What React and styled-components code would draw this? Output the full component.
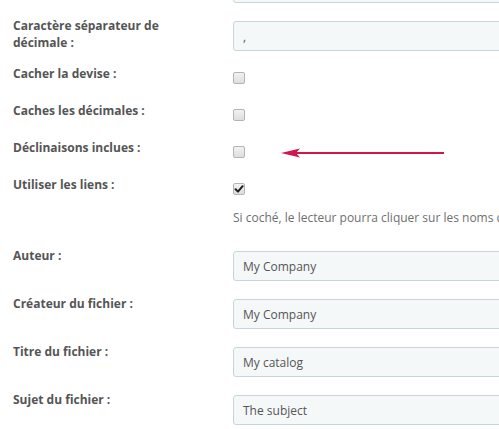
import styled, { createGlobalStyle } from "styled-components";

const GlobalStyle = createGlobalStyle`
  html, body {
    margin: 0;
    padding: 0;
    background: #ffffff;
    overflow: hidden;
  }
  body {
    font-family: "Open Sans", "DejaVu Sans", sans-serif;
  }
`;

const fields = [
  { label: "", type: "text", value: "" },
  { label: "Caractère séparateur de décimale :", type: "text", value: "," },
  { label: "Cacher la devise :", type: "check", checked: false },
  { label: "Caches les décimales :", type: "check", checked: false },
  { label: "Déclinaisons inclues :", type: "check", checked: false, arrow: true },
  {
    label: "Utiliser les liens :",
    type: "check",
    checked: true,
    help: "Si coché, le lecteur pourra cliquer sur les noms des produits",
  },
  { label: "Auteur :", type: "text", value: "My Company" },
  { label: "Créateur du fichier :", type: "text", value: "My Company" },
  { label: "Titre du fichier :", type: "text", value: "My catalog" },
  { label: "Sujet du fichier :", type: "text", value: "The subject" },
];

const Checkbox = ({ checked }) => (
  <StyledCheck>
    {checked && (
      <svg width="10" height="10" viewBox="0 0 10 10">
        <path
          d="M1.6 5.2 L4 7.6 L8.6 2.2"
          fill="none"
          stroke="#1e1e1e"
          strokeWidth="2"
          strokeLinecap="round"
          strokeLinejoin="round"
        />
      </svg>
    )}
  </StyledCheck>
);

const Arrow = () => (
  <StyledArrow width="164" height="10" viewBox="0 0 164 10">
    <line x1="14" y1="5" x2="163" y2="5" stroke="#d3154b" strokeWidth="2" />
    <path d="M0 5 L19 0.5 L15 5 L19 9.5 Z" fill="#d3154b" />
  </StyledArrow>
);

const App = () => {
  return (
    <>
      <GlobalStyle />
      <StyledForm>
        {fields.map((f, i) => (
          <StyledRow key={i}>
            <StyledLabel>{f.label}</StyledLabel>
            <StyledControl $check={f.type === "check"}>
              {f.type === "text" ? (
                <StyledInput>{f.value}</StyledInput>
              ) : (
                <Checkbox checked={f.checked} />
              )}
              {f.help && <StyledHelp>{f.help}</StyledHelp>}
              {f.arrow && <Arrow />}
            </StyledControl>
          </StyledRow>
        ))}
      </StyledForm>
    </>
  );
};

const StyledForm = styled.div`
  margin-top: -31px;
  padding-left: 13px;
  display: flex;
  flex-direction: column;
`;
const StyledRow = styled.div`
  display: flex;
  flex-direction: row;
  align-items: flex-start;
  margin-bottom: 14px;
`;
const StyledLabel = styled.div`
  width: 190px;
  flex: none;
  margin-right: 30px;
  font-size: 12px;
  line-height: 17px;
  font-weight: 700;
  color: #555555;
`;
const StyledControl = styled.div`
  position: relative;
  flex: none;
  width: 340px;
  padding-top: ${(props) => (props.$check ? "7px" : "4px")};
`;
const StyledInput = styled.div`
  box-sizing: border-box;
  height: 30px;
  width: 100%;
  padding: 0 9px;
  display: flex;
  align-items: center;
  background: #f5f8f9;
  border: 1px solid #c7d6db;
  border-radius: 3px;
  font-size: 12px;
  color: #555555;
`;
const StyledCheck = styled.div`
  box-sizing: border-box;
  width: 12px;
  height: 12px;
  margin-bottom: 4px;
  border: 1px solid #b4b4b4;
  border-radius: 2px;
  background: linear-gradient(#f2f2f2, #dedede);
  display: flex;
  align-items: center;
  justify-content: center;
`;
const StyledHelp = styled.div`
  margin: 14px 0 7px;
  font-size: 12px;
  line-height: 17px;
  color: #6f6f6f;
  white-space: nowrap;
`;
const StyledArrow = styled.svg`
  position: absolute;
  left: 48px;
  top: 9px;
`;

export default App;
